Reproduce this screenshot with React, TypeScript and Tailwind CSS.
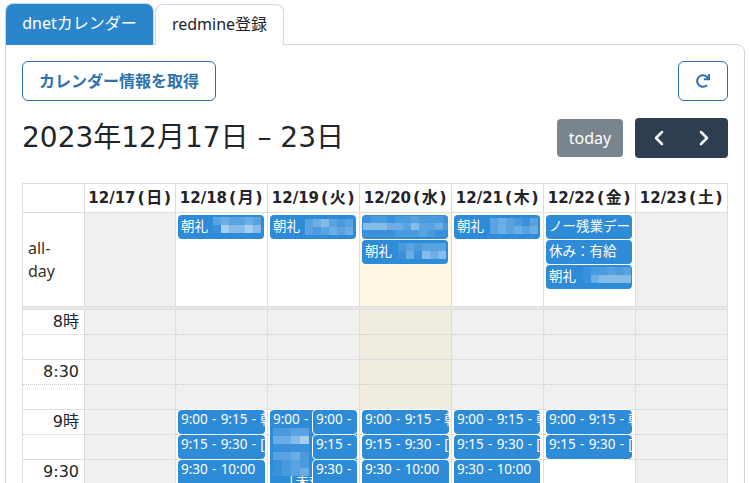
import React from 'react';
import { FaRedo } from 'react-icons/fa';
import { ChevronLeft, ChevronRight } from 'lucide-react';

const FONT = '"Noto Sans", "Noto Sans CJK JP", sans-serif';
const WIDE = '"DejaVu Sans", "Noto Sans CJK JP", sans-serif';

const COLS = 'grid grid-cols-[62px_91px_repeat(6,92px)]';
const tones: Record<string, string> = {
  a: '#3a90da',
  b: '#4a9ade',
  c: '#5aa3e1',
  d: '#6bade5',
  e: '#85bcea',
  f: '#a5cff0',
  g: '#c8e0f5',
};

// blurred-out parts of the screenshot
const Mosaic: React.FC<{ rows: string[]; w?: number; h?: number; className: string }> = ({
  rows, w = 8, h = 8, className,
}) => (
  <svg className={`absolute ${className}`} width={rows[0].length * w} height={rows.length * h}>
    {rows.map((row, y) =>
      row.split('').map((c, x) => (
        <rect key={`${x}-${y}`} x={x * w} y={y * h} width={w} height={h} fill={tones[c]} />
      )),
    )}
  </svg>
);

const AllDayEvent: React.FC<{ children?: React.ReactNode }> = ({ children }) => (
  <div className="relative h-[24px] mb-[1px] ml-[2px] mr-[3px] px-[3px] rounded-[4px] bg-[#2e8bd8] text-white text-[13.5px] leading-[23px] overflow-hidden whitespace-nowrap">
    {children}
  </div>
);

const TimeEvent: React.FC<{ className: string; children?: React.ReactNode }> = ({ className, children }) => (
  <div
    className={`relative rounded-[4px] bg-[#2e8bd8] text-white text-[13.5px] leading-[18px] [word-spacing:0.75px] pl-[3px] overflow-hidden whitespace-nowrap ring-1 ring-white ${className}`}
  >
    {children}
  </div>
);

const days = [
  ['12/17', '(日)'],
  ['12/18', '(月)'],
  ['12/19', '(火)'],
  ['12/20', '(水)'],
  ['12/21', '(木)'],
  ['12/22', '(金)'],
  ['12/23', '(土)'],
];
const slots = [
  { label: '8時', off: true, solid: false },
  { label: '', off: true, solid: true },
  { label: '8:30', off: true, solid: false },
  { label: '', off: true, solid: true },
  { label: '9時', off: false, solid: false },
  { label: '', off: false, solid: true },
  { label: '9:30', off: false, solid: false },
  { label: '', off: false, solid: true },
];

const slotBg = (dayIndex: number, off: boolean) => {
  if (dayIndex === 0 || dayIndex === 6) return 'bg-[#f0f0f0]';
  if (dayIndex === 3) return off ? 'bg-[#f0ecdf]' : 'bg-[#fef6e0]';
  return off ? 'bg-[#f0f0f0]' : 'bg-white';
};

const App: React.FC = () => {
  return (
    <div className="w-[749px] h-[483px] overflow-hidden bg-white text-[#212529]" style={{ fontFamily: FONT }}>
      {/* Tabs */}
      <div className="flex items-end h-[45px] pt-[3px] pl-[5px] gap-[1px]">
        <div className="flex items-center justify-center w-[149px] h-[42px] pb-[3px] rounded-t-[8px] border border-[#cbd8e5] border-b-0 bg-[#2a85cb] text-white text-[16px]">
          dnetカレンダー
        </div>
        <div className="flex items-center justify-center w-[129px] h-[41px] pb-[3px] rounded-t-[8px] border border-[#cbd8e5] border-b-0 bg-white text-[16px]">
          redmine登録
        </div>
      </div>

      {/* Panel */}
      <div className="w-[740px] ml-[5px] -mt-[1px] h-[500px] px-[16px] pt-[16px] border border-[#cbd8e5] rounded-tr-[8px]">
        <div className="flex justify-between">
          <button className="w-[194px] h-[40px] rounded-[6px] border border-[#2a70ae] text-[#2f72ad] text-[16px] font-bold">
            カレンダー情報を取得
          </button>
          <button className="flex items-center justify-center w-[50px] h-[40px] rounded-[6px] border border-[#2a70ae] text-[#2a70ae]">
            <FaRedo size={14} />
          </button>
        </div>

        <div className="flex items-center justify-between mt-[17px] h-[40px]">
          <div className="text-[28px] leading-[38px]" style={{ fontFamily: WIDE }}>
            2023年12月17日 – 23日
          </div>
          <div className="flex items-center">
            <div className="flex items-center justify-center w-[66px] h-[38px] rounded-[4px] bg-[#7a848d] text-white text-[16px]">
              today
            </div>
            <div className="flex items-center justify-around w-[93px] h-[40px] ml-[12px] px-[1px] rounded-[4px] bg-[#2c3e50] text-white">
              <ChevronLeft size={24} strokeWidth={2.5} />
              <ChevronRight size={24} strokeWidth={2.5} />
            </div>
          </div>
        </div>

        {/* Calendar */}
        <div className="mt-[25px] w-[706px] border-t border-l border-[#ddd]">
          <div className={COLS} style={{ fontFamily: WIDE }}>
            <div className="h-[29px] border-r border-b border-[#ddd]" />
            {days.map(([date, week]) => (
              <div
                key={date}
                className="flex items-center justify-center h-[29px] border-r border-b border-[#ddd] text-[15px] font-bold whitespace-nowrap overflow-hidden"
              >
                {date}
                <span className="pl-[2px] text-[16px] tracking-[1.5px] -mr-[1px]">{week}</span>
              </div>
            ))}
          </div>

          <div className={COLS}>
            <div className="flex items-center h-[94px] pl-[5px] pr-[20px] border-r border-b border-[#ddd] text-[16px] leading-[23px] text-[#3a2f25]">
              all-day
            </div>
            <div className="h-[94px] pt-[2px] border-r border-b border-[#ddd] bg-[#f0f0f0]" />
            <div className="h-[94px] pt-[2px] border-r border-b border-[#ddd]">
              <AllDayEvent>
                朝礼
                <Mosaic rows={['cdccdc', 'afeefe']} className="left-[35px] top-[2px]" />
              </AllDayEvent>
            </div>
            <div className="h-[94px] pt-[2px] border-r border-b border-[#ddd]">
              <AllDayEvent>
                朝礼
                <Mosaic rows={['cdecbc', 'cbcdcd']} className="left-[35px] top-[4px]" />
              </AllDayEvent>
            </div>
            <div className="h-[94px] pt-[2px] border-r border-b border-[#ddd] bg-[#fef6e0]">
              <AllDayEvent>
                <Mosaic rows={['abbabbcbbba', 'eeeddceccdb', 'aaaabbbcbaa']} h={7} className="left-[1px] top-[1px]" />
              </AllDayEvent>
              <AllDayEvent>
                朝礼
                <Mosaic rows={['bcbccc', 'adaede']} className="left-[36px] top-[3px]" />
              </AllDayEvent>
            </div>
            <div className="h-[94px] pt-[2px] border-r border-b border-[#ddd]">
              <AllDayEvent>
                朝礼
                <Mosaic rows={['cdcbac', 'cdcdcd']} className="left-[36px] top-[3px]" />
              </AllDayEvent>
            </div>
            <div className="h-[94px] pt-[2px] border-r border-b border-[#ddd]">
              <AllDayEvent>ノー残業デー</AllDayEvent>
              <AllDayEvent>休み：有給</AllDayEvent>
              <AllDayEvent>
                朝礼
                <Mosaic rows={['abbcbc', 'adeeee']} className="left-[37px] top-[2px]" />
              </AllDayEvent>
            </div>
            <div className="h-[94px] border-r border-b border-[#ddd] bg-[#f0f0f0]" />
          </div>

          <div className="h-[3px] bg-[#e8e8e8] border-b border-[#ddd] w-[705px]" />

          {/* Time grid */}
          <div className="relative">
            {slots.map((s, i) => (
              <div key={i} className={COLS}>
                <div
                  className={`h-[25px] pr-[5px] border-r border-r-[#ddd] border-b text-right text-[16px] leading-[23px] ${
                    s.solid ? 'border-b-[#ddd]' : 'border-b-[#ccc] [border-bottom-style:dotted]'
                  }`}
                  style={{ fontFamily: WIDE }}
                >
                  {s.label}
                </div>
                {days.map(([date], j) => (
                  <div
                    key={date}
                    className={`h-[25px] border-r border-r-[#ddd] border-b ${slotBg(j, s.off)} ${
                      s.solid ? 'border-b-[#ddd]' : 'border-b-[#ccc] [border-bottom-style:dotted]'
                    }`}
                  />
                ))}
              </div>
            ))}

            {/* Events layer */}
            <div className={`absolute inset-0 ${COLS} grid-rows-[repeat(8,25px)]`}>
              <TimeEvent className="col-start-3 row-start-5 ml-[2px] mr-[3px] mb-[1px]">9:00 - 9:15 - 朝礼</TimeEvent>
              <TimeEvent className="col-start-3 row-start-6 ml-[2px] mr-[3px] mb-[1px]">9:15 - 9:30 - [打合せ]</TimeEvent>
              <TimeEvent className="col-start-3 row-start-7 row-span-2 ml-[2px] mr-[3px]">9:30 - 10:00</TimeEvent>

              <TimeEvent className="col-start-4 row-start-5 row-span-4 ml-[2px] mr-[3px]">
                9:00 -
                <div className="absolute left-[12px] top-[62px]">「未対応</div>
                <Mosaic rows={['bbcc', 'ddef', 'aaaa', 'ccdb', 'abcb', 'abcd']} w={9} className="left-[3px] top-[18px]" />
              </TimeEvent>
              <TimeEvent className="col-start-4 row-start-5 ml-[45px] mr-[3px] mb-[1px]">9:00 -</TimeEvent>
              <TimeEvent className="col-start-4 row-start-6 ml-[45px] mr-[3px] mb-[1px]">9:15 -</TimeEvent>
              <TimeEvent className="col-start-4 row-start-7 row-span-2 ml-[45px] mr-[3px]">9:30 -</TimeEvent>

              <TimeEvent className="col-start-5 row-start-5 ml-[2px] mr-[3px] mb-[1px]">9:00 - 9:15 - 朝礼</TimeEvent>
              <TimeEvent className="col-start-5 row-start-6 ml-[2px] mr-[3px] mb-[1px]">9:15 - 9:30 - [打合せ]</TimeEvent>
              <TimeEvent className="col-start-5 row-start-7 row-span-2 ml-[2px] mr-[3px]">9:30 - 10:00</TimeEvent>

              <TimeEvent className="col-start-6 row-start-5 ml-[2px] mr-[4px] mb-[1px]">9:00 - 9:15 - 朝礼</TimeEvent>
              <TimeEvent className="col-start-6 row-start-6 ml-[2px] mr-[4px] mb-[1px]">9:15 - 9:30 - [打合せ]</TimeEvent>
              <TimeEvent className="col-start-6 row-start-7 row-span-2 ml-[2px] mr-[4px]">9:30 - 10:00</TimeEvent>

              <TimeEvent className="col-start-7 row-start-5 ml-[2px] mr-[4px] mb-[1px]">9:00 - 9:15 - 朝礼</TimeEvent>
              <TimeEvent className="col-start-7 row-start-6 ml-[2px] mr-[4px] mb-[1px]">9:15 - 9:30 - [打合せ]</TimeEvent>
            </div>
          </div>
        </div>
      </div>
    </div>
  );
};

export default App;
